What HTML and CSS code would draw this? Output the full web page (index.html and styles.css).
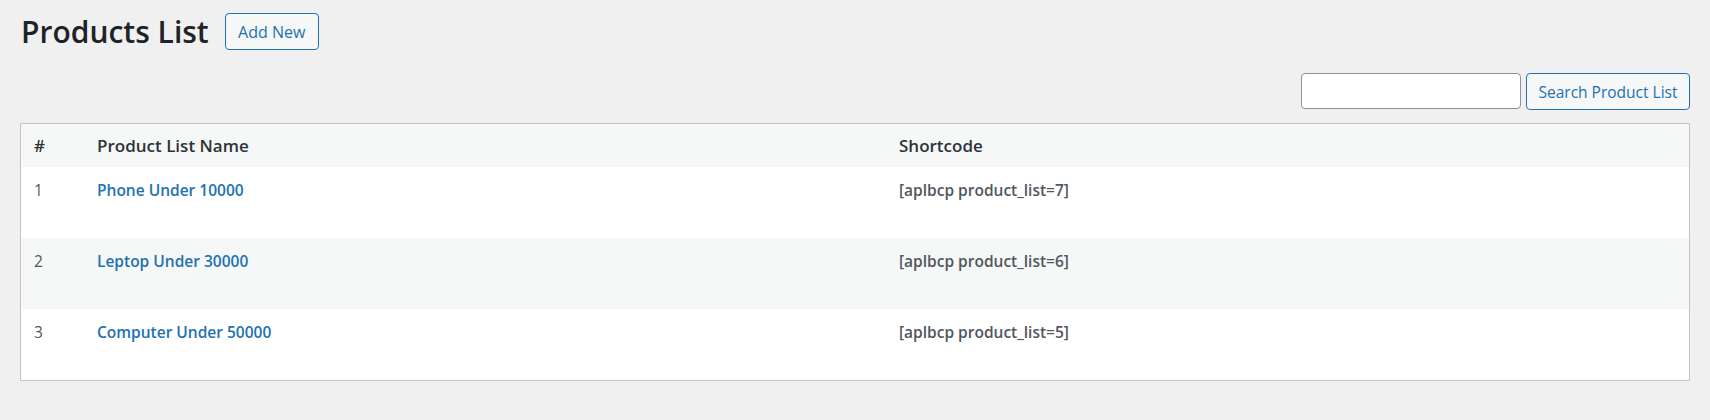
FILE: index.html
```html
<!DOCTYPE html>
<html>
<head>
<meta charset="utf-8">
<link rel="stylesheet" href="styles.css">
</head>
<body>
<div class="wrap">
  <div class="page-head">
    <h1 class="page-title">Products List</h1>
    <a class="btn add-new" href="#">Add New</a>
  </div>
  <form class="search-box">
    <input class="search-input" type="search">
    <button class="btn search-btn" type="button">Search Product List</button>
  </form>
  <table class="list-table">
    <colgroup>
      <col class="col-num">
      <col class="col-name">
      <col class="col-code">
    </colgroup>
    <thead>
      <tr><th>#</th><th>Product List Name</th><th>Shortcode</th></tr>
    </thead>
    <tbody>
      <tr><td class="num">1</td><td><a class="row-title" href="#">Phone Under 10000</a></td><td class="code">[aplbcp product_list=7]</td></tr>
      <tr class="alt"><td class="num">2</td><td><a class="row-title" href="#">Leptop Under 30000</a></td><td class="code">[aplbcp product_list=6]</td></tr>
      <tr><td class="num">3</td><td><a class="row-title" href="#">Computer Under 50000</a></td><td class="code">[aplbcp product_list=5]</td></tr>
    </tbody>
  </table>
</div>
</body>
</html>
```

FILE: styles.css
```css
html, body {
  margin: 0;
  padding: 0;
  background: #f0f0f1;
  font-family: "Open Sans", "Noto Sans", "Liberation Sans", sans-serif;
  color: #3c434a;
}
.wrap {
  padding: 0 20px 0 20px;
}
.page-head {
  display: flex;
  align-items: center;
  gap: 16px;
  height: 65px;
}
.page-title {
  margin: -1px 0 0;
  padding-left: 1px;
  font-size: 30px;
  font-weight: 600;
  color: #1d2327;
  line-height: 40px;
}
.btn {
  display: inline-flex;
  align-items: center;
  justify-content: center;
  box-sizing: border-box;
  border: 1px solid #2271b1;
  border-radius: 4px;
  background: #f6f7f7;
  color: #2271b1;
  font-family: inherit;
  font-size: 16px;
  text-decoration: none;
  cursor: pointer;
}
.add-new {
  width: 94px;
  height: 37px;
  margin-top: -2px;
}
.search-box {
  display: flex;
  justify-content: flex-end;
  gap: 5px;
  margin: 8px 0 13px;
}
.search-input {
  box-sizing: border-box;
  width: 220px;
  height: 36px;
  border: 1px solid #8c8f94;
  border-radius: 4px;
  background: #fff;
  margin: 0;
}
.search-btn {
  width: 164px;
  height: 37px;
  font-size: 15.5px;
}
.list-table {
  width: 100%;
  border: 1px solid #c3c4c7;
  border-collapse: separate;
  border-spacing: 0;
  table-layout: fixed;
  background: #fff;
}
.col-num { width: 63px; }
.col-name { width: 802px; }
.list-table th {
  text-align: left;
  background: #f6f7f7;
  color: #2c3338;
  font-size: 17px;
  font-weight: 600;
  line-height: 23px;
  padding: 10px 13px;
}
.list-table td {
  font-size: 15.5px;
  line-height: 24px;
  padding: 11px 13px 36px;
  vertical-align: top;
  color: #50575e;
}
.list-table tr.alt td {
  background: #f6f7f7;
}
.row-title {
  color: #2271b1;
  font-size: 15.5px;
  font-weight: 600;
  text-decoration: none;
}
.code {
  font-weight: 600;
}
```
